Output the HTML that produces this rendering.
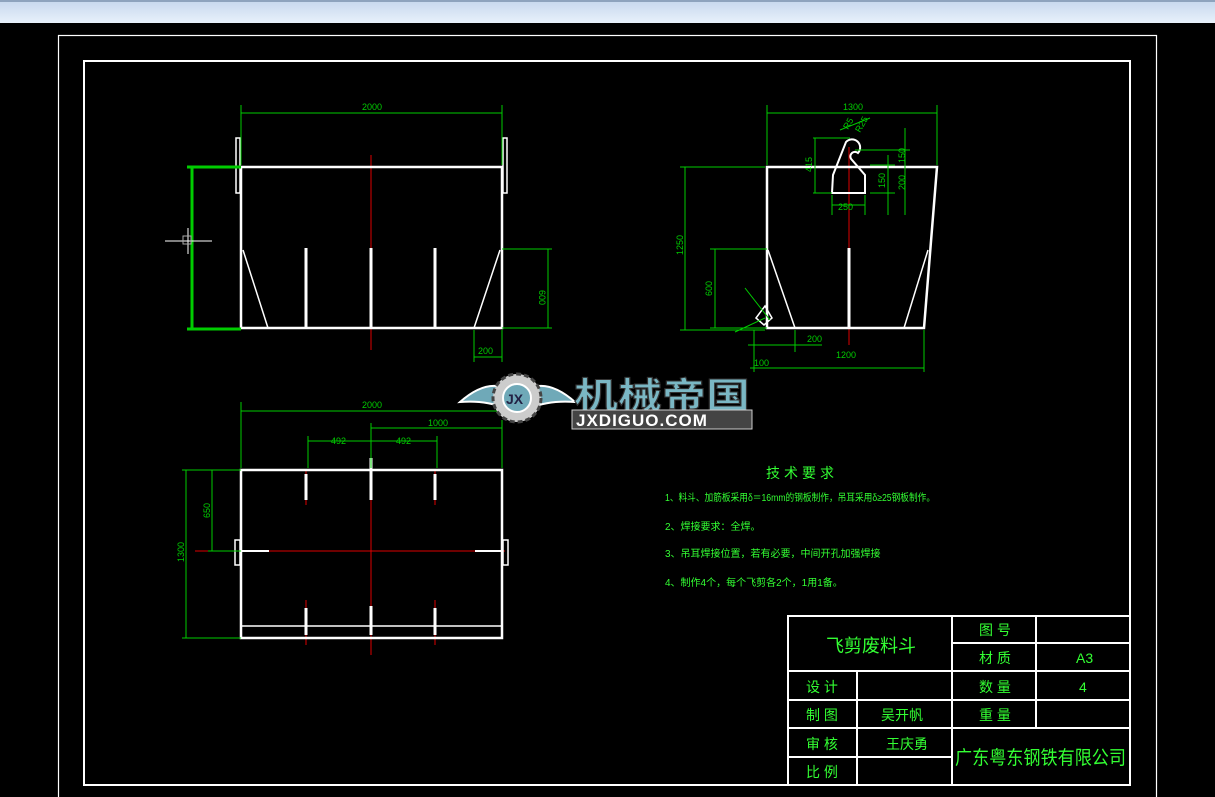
<!DOCTYPE html>
<html><head><meta charset="utf-8"><style>
html,body{margin:0;padding:0;width:1215px;height:797px;overflow:hidden;background:#000}
.bar{position:absolute;left:0;top:0;width:1215px;height:23px;background:linear-gradient(#c9d9ee,#e8f1fb);border-top:2px solid #8ea3bd;box-sizing:border-box}
svg{position:absolute;left:0;top:0}
text{font-family:"Liberation Sans","Noto Sans CJK SC",sans-serif}
</style></head><body>
<div class="bar"></div>
<svg width="1215" height="797" viewBox="0 0 1215 797">
<g fill="none" stroke="#fff">
<rect x="58.5" y="35.5" width="1098" height="800" stroke-width="1.2"/>
<rect x="84" y="61" width="1046" height="724" stroke-width="2"/>
</g>
<!-- red centerlines first -->
<g stroke="#d00" stroke-width="1">
<path d="M371 155V350M849 147V345M371 455V655M195 551H505M306 470V505M435 470V505M306 600V645M435 600V645"/>
</g>
<!-- front view -->
<g stroke="#fff" stroke-width="2.5" fill="none">
<rect x="241" y="167" width="261" height="161"/>
<rect x="236" y="138" width="4" height="55" stroke-width="1.5"/>
<rect x="503" y="138" width="4" height="55" stroke-width="1.5"/>
<line x1="243" y1="250" x2="268" y2="328" stroke-width="1.5"/>
<line x1="500" y1="250" x2="474" y2="328" stroke-width="1.5"/>
<line x1="306" y1="248" x2="306" y2="328" stroke-width="3"/>
<line x1="371" y1="248" x2="371" y2="328" stroke-width="3"/>
<line x1="435" y1="248" x2="435" y2="328" stroke-width="3"/>
</g>
<g stroke="#0c0" stroke-width="1" fill="none">
<path d="M241 105V165M502 105V165M241 113H502"/>
<path d="M502 249H552M502 328H552M548 249V328"/>
<path d="M474 330V362M502 330V362M474 357H502"/>
<path d="M192 167V329M187 167H241M187 329H241" stroke-width="3"/>
</g>
<path d="M165 241H212M188 228V254" stroke="#fff" stroke-width="1"/>
<rect x="183" y="236" width="8" height="8" fill="none" stroke="#aaa"/>
<g fill="#0c0" font-size="9">
<text x="362" y="110">2000</text>
<text x="478" y="354">200</text>
<text x="545" y="296" transform="rotate(90 545 290)">600</text>
</g>
<!-- side view -->
<g stroke="#fff" stroke-width="2.5" fill="none">
<path d="M767 167H937L924 328H767Z"/>
<line x1="768" y1="250" x2="795" y2="328" stroke-width="1.5"/>
<line x1="928" y1="250" x2="904" y2="328" stroke-width="1.5"/>
<line x1="849" y1="248" x2="849" y2="328" stroke-width="3"/>
<path d="M832 193H865V175L852 160A4 4 0 1 1 858 153A8 8 0 0 0 846 142L833 175Z" stroke-width="2"/>
<path d="M756 318L765 306L772 318L764 325Z" stroke-width="1.5"/>
</g>
<g stroke="#0c0" stroke-width="1" fill="none">
<path d="M767 105V165M937 105V165M767 113H937"/>
<path d="M680 167H765M680 330H765M685 167V330"/>
<path d="M710 249H767M710 328H767M715 249V328"/>
<path d="M754 330V372M924 330V372M750 368H924"/>
<path d="M795 330V352M748 345H822"/>
<path d="M832 195V215M865 195V215M832 205H865"/>
<path d="M813 138H850M813 193H832M815 138V193"/>
<path d="M870 165H895M870 193H895M888 155V215M905 128V215M855 150H910"/>
<path d="M840 130L870 118M745 288L770 320M735 332L765 318"/>
</g>
<g fill="#0c0" font-size="9">
<text x="843" y="110">1300</text>
<text x="836" y="358">1200</text>
<text x="807" y="342">200</text>
<text x="838" y="210">250</text>
<text x="754" y="366">100</text>
<text x="683" y="255" transform="rotate(-90 683 255)">1250</text>
<text x="712" y="296" transform="rotate(-90 712 296)">600</text>
<text x="812" y="172" transform="rotate(-90 812 172)">415</text>
<text x="885" y="188" transform="rotate(-90 885 188)">150</text>
<text x="905" y="190" transform="rotate(-90 905 190)">200</text>
<text x="905" y="163" transform="rotate(-90 905 163)">150</text>
<text x="848" y="130" transform="rotate(-60 848 130)">R5</text>
<text x="860" y="133" transform="rotate(-60 860 133)">R25</text>
</g>
<!-- plan view -->
<g stroke="#fff" stroke-width="2.5" fill="none">
<rect x="241" y="470" width="261" height="168"/>
<line x1="241" y1="626" x2="502" y2="626" stroke-width="1.5"/>
<rect x="235" y="540" width="5" height="25" stroke-width="1.5"/>
<rect x="503" y="540" width="5" height="25" stroke-width="1.5"/>
<path d="M241 551H269M475 551H502" stroke-width="2"/>
<path d="M306 474V500M371 458V500M435 474V500M306 608V635M371 606V635M435 608V635" stroke-width="3"/>
</g>
<g stroke="#0c0" stroke-width="1" fill="none">
<path d="M241 402V468M502 420V468M241 411H502"/>
<path d="M371 428H502M371 423V468"/>
<path d="M308 441H437M308 436V468M437 436V468"/>
<path d="M182 470H241M182 638H241M186 470V638"/>
<path d="M208 470H241M212 470V551M208 551H241"/>
</g>
<g fill="#0c0" font-size="9">
<text x="362" y="408">2000</text>
<text x="428" y="426">1000</text>
<text x="331" y="444">492</text>
<text x="396" y="444">492</text>
<text x="184" y="562" transform="rotate(-90 184 562)">1300</text>
<text x="210" y="518" transform="rotate(-90 210 518)">650</text>
</g>
<!-- logo -->
<g>
<path d="M460 402Q485 380 505 388L505 408Q485 400 460 402Z" fill="#6fa9b8" stroke="#fff" stroke-width="2"/>
<path d="M575 402Q550 380 530 388L530 408Q550 400 575 402Z" fill="#6fa9b8" stroke="#fff" stroke-width="2"/>
<circle cx="517" cy="398" r="24" fill="#ccc" stroke="#444" stroke-width="3" stroke-dasharray="5 3"/>
<circle cx="517" cy="398" r="14" fill="#6fa9b8" stroke="#fff" stroke-width="2"/>
<text x="506" y="404" font-size="14" font-weight="bold" fill="#224">JX</text>
<text x="574" y="408" font-size="36" font-weight="bold" fill="#7ab7c4" stroke="#333" stroke-width="1" style='font-family:"Noto Sans CJK SC",sans-serif' textLength="176" lengthAdjust="spacingAndGlyphs">机械帝国</text>
<rect x="572" y="410" width="180" height="19" fill="#444" stroke="#ccc"/>
<text x="576" y="426" font-size="17" font-weight="bold" fill="#fff" letter-spacing="1">JXDIGUO.COM</text>
</g>
<!-- tech notes -->
<g fill="#3f3" font-size="10" style='font-family:"Noto Sans CJK SC",sans-serif'>
<text x="766" y="478" font-size="14" letter-spacing="4">技术要求</text>
<text x="665" y="501" textLength="270" lengthAdjust="spacingAndGlyphs">1、料斗、加筋板采用δ＝16mm的钢板制作，吊耳采用δ≥25钢板制作。</text>
<text x="665" y="530">2、焊接要求：全焊。</text>
<text x="665" y="557">3、吊耳焊接位置，若有必要，中间开孔加强焊接</text>
<text x="665" y="586">4、制作4个，每个飞剪各2个，1用1备。</text>
</g>
<!-- title block -->
<g stroke="#fff" stroke-width="2" fill="none">
<rect x="788" y="616" width="342" height="169"/>
<path d="M857 671V785M952 616V785M1036 616V728M952 643H1130M788 671H1130M788 700H1130M788 728H1130M788 757H952"/>
</g>
<g fill="#3f3" font-size="14" style='font-family:"Noto Sans CJK SC",sans-serif'>
<text x="826" y="652" font-size="18">飞剪废料斗</text>
<text x="979" y="635">图 号</text>
<text x="979" y="663">材 质</text>
<text x="1076" y="663">A3</text>
<text x="979" y="692">数 量</text>
<text x="1079" y="692">4</text>
<text x="979" y="720">重 量</text>
<text x="806" y="692">设 计</text>
<text x="806" y="720">制 图</text>
<text x="881" y="720">吴开帆</text>
<text x="806" y="749">审 核</text>
<text x="886" y="749">王庆勇</text>
<text x="806" y="777">比 例</text>
<text x="955" y="764" font-size="19" textLength="171" lengthAdjust="spacingAndGlyphs">广东粤东钢铁有限公司</text>
</g>
</svg>
</body></html>
